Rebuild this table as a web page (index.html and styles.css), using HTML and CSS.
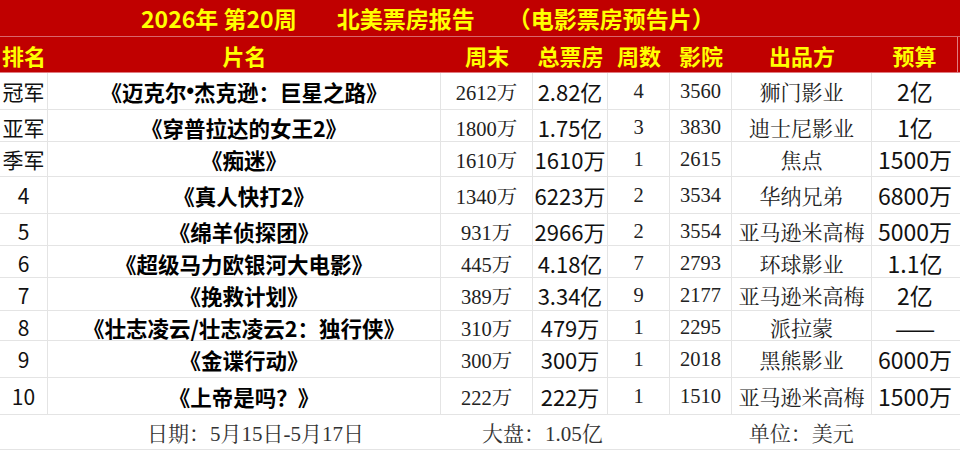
FILE: index.html
```html
<!DOCTYPE html>
<html lang="zh-CN">
<head>
<meta charset="utf-8">
<title>北美票房报告</title>
<link rel="stylesheet" href="styles.css">
</head>
<body>
<div class="sheet">
  <div class="title">
    <span class="t1">2026年 第20周</span>
    <span class="t2">北美票房报告</span>
    <span class="t3">（电影票房预告片）</span>
  </div>
  <div class="row head">
    <div>排名</div><div>片名</div><div>周末</div><div>总票房</div><div>周数</div><div>影院</div><div>出品方</div><div>预算</div>
  </div>
  <div class="row data h37">
    <div class="rank">冠军</div><div class="name">《迈克尔<span class="dot">•</span>杰克逊：巨星之路》</div><div class="serif">2612万</div><div class="total">2.82亿</div><div class="serif">4</div><div class="serif">3560</div><div class="studio">狮门影业</div><div class="budget">2亿</div>
  </div>
  <div class="row data h32">
    <div class="rank">亚军</div><div class="name">《穿普拉达的女王2》</div><div class="serif">1800万</div><div class="total">1.75亿</div><div class="serif">3</div><div class="serif">3830</div><div class="studio">迪士尼影业</div><div class="budget">1亿</div>
  </div>
  <div class="row data h35">
    <div class="rank">季军</div><div class="name">《痴迷》</div><div class="serif">1610万</div><div class="total">1610万</div><div class="serif">1</div><div class="serif">2615</div><div class="studio">焦点</div><div class="budget">1500万</div>
  </div>
  <div class="row data h37">
    <div class="rank">4</div><div class="name">《真人快打2》</div><div class="serif">1340万</div><div class="total">6223万</div><div class="serif">2</div><div class="serif">3534</div><div class="studio">华纳兄弟</div><div class="budget">6800万</div>
  </div>
  <div class="row data h32">
    <div class="rank">5</div><div class="name">《绵羊侦探团》</div><div class="serif">931万</div><div class="total">2966万</div><div class="serif">2</div><div class="serif">3554</div><div class="studio">亚马逊米高梅</div><div class="budget">5000万</div>
  </div>
  <div class="row data h32">
    <div class="rank">6</div><div class="name">《超级马力欧银河大电影》</div><div class="serif">445万</div><div class="total">4.18亿</div><div class="serif">7</div><div class="serif">2793</div><div class="studio">环球影业</div><div class="budget">1.1亿</div>
  </div>
  <div class="row data h33">
    <div class="rank">7</div><div class="name">《挽救计划》</div><div class="serif">389万</div><div class="total">3.34亿</div><div class="serif">9</div><div class="serif">2177</div><div class="studio">亚马逊米高梅</div><div class="budget">2亿</div>
  </div>
  <div class="row data h31">
    <div class="rank">8</div><div class="name">《壮志凌云/壮志凌云2：独行侠》</div><div class="serif">310万</div><div class="total">479万</div><div class="serif">1</div><div class="serif">2295</div><div class="studio">派拉蒙</div><div class="budget dash">——</div>
  </div>
  <div class="row data h37">
    <div class="rank">9</div><div class="name">《金谍行动》</div><div class="serif">300万</div><div class="total">300万</div><div class="serif">1</div><div class="serif">2018</div><div class="studio">黑熊影业</div><div class="budget">6000万</div>
  </div>
  <div class="row data h37">
    <div class="rank">10</div><div class="name">《上帝是吗？》</div><div class="serif">222万</div><div class="total">222万</div><div class="serif">1</div><div class="serif">1510</div><div class="studio">亚马逊米高梅</div><div class="budget">1500万</div>
  </div>
  <div class="foot">
    <div class="f-date">日期：5月15日-5月17日</div>
    <div class="f-total">大盘：1.05亿</div>
    <div class="f-unit">单位：美元</div>
  </div>
</div>
</body>
</html>
```
FILE: styles.css
```css
* { box-sizing: border-box; }
html, body { margin: 0; padding: 0; background: #fff; }
body { width: 960px; height: 452px; overflow: hidden; }

.sheet {
  width: 960px;
  font-family: "Noto Sans CJK SC", sans-serif;
}

.title {
  height: 37px;
  background: #c00000;
  color: #ffff00;
  font-weight: 700;
  font-size: 23px;
  display: flex;
  align-items: center;
  padding-left: 141px;
  white-space: nowrap;
  border-bottom: 1px solid #d9666b;
}
.title .t2 { margin-left: 40px; }
.title .t3 { margin-left: 33px; }

.row {
  display: grid;
  grid-template-columns: 48px 393px 92px 75px 62px 62px 140px 86px 2px;
  width: 960px;
}
.row > div {
  display: flex;
  align-items: center;
  justify-content: center;
  white-space: nowrap;
}

.head {
  height: 36px;
  background: #c00000;
  color: #ffff00;
  font-weight: 700;
  font-size: 22px;
  border-bottom: 1px solid #e07b80;
}
.head > div:nth-child(8) { border-right: 1px solid #e07b80; }

.data { border-bottom: 1px solid #e4e4e4; color: #111; }
.data > div { border-right: 1px solid #e4e4e4; }
.data > div:last-child { border-right: none; }

.h31 { height: 30px; }
.h32 { height: 32px; }
.h33 { height: 33px; }
.h35 { height: 35px; }
.h37 { height: 37px; }

.rank { font-size: 21px; }
.name { font-weight: 700; font-size: 21.5px; color: #000; }
.name .dot { font-family: "Liberation Sans", sans-serif; font-weight: 700; }
.serif {
  font-family: "Liberation Serif", "Noto Serif CJK SC", "Noto Sans CJK SC", serif;
  font-size: 20.5px;
  color: #222;
}
.total { font-size: 22px; }
.studio {
  font-family: "Noto Serif CJK SC", "Liberation Serif", "Noto Sans CJK SC", serif;
  font-size: 21px;
  color: #222;
}
.budget { font-size: 23px; }
.budget.dash { font-size: 24px; line-height: 1; padding-top: 2px; }

.foot {
  height: 35px;
  display: flex;
  align-items: center;
  font-family: "Liberation Serif", "Noto Serif CJK SC", "Noto Sans CJK SC", serif;
  font-size: 21px;
  color: #333;
  white-space: nowrap;
  border-bottom: 1px solid #e4e4e4;
}
.f-date { margin-left: 147px; }
.f-total { margin-left: 118px; }
.f-unit { margin-left: 146px; }
```
